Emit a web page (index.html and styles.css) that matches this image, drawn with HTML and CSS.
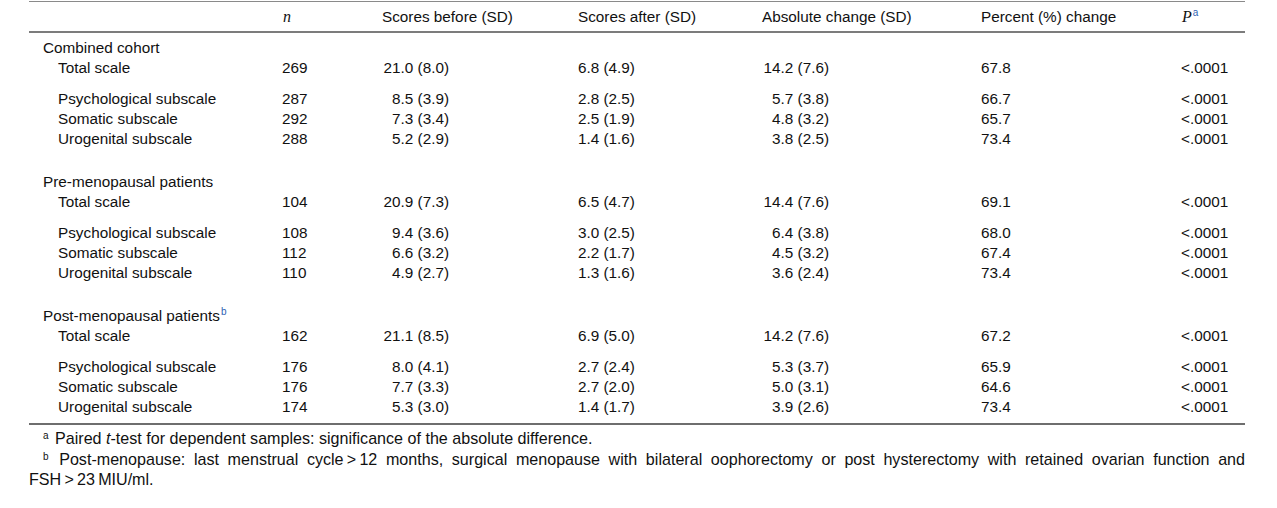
FILE: index.html
```html
<!DOCTYPE html>
<html lang="en">
<head>
<meta charset="utf-8">
<title>Scores table</title>
<link rel="stylesheet" href="styles.css">
</head>
<body>
<div class="wrap">
<table class="data">
  <colgroup>
    <col class="c-label"><col class="c-n"><col class="c-before"><col class="c-after"><col class="c-abs"><col class="c-pct"><col class="c-p">
  </colgroup>
  <thead>
    <tr>
      <th class="lbl"></th>
      <th><span class="ital">n</span></th>
      <th>Scores before (SD)</th>
      <th>Scores after (SD)</th>
      <th>Absolute change (SD)</th>
      <th>Percent (%) change</th>
      <th><span class="ital">P</span><sup class="ref">a</sup></th>
    </tr>
  </thead>
  <tbody>
    <tr class="first"><td class="lbl">Combined cohort</td><td></td><td></td><td></td><td></td><td></td><td></td></tr>
    <tr><td class="lbl sub">Total scale</td><td>269</td><td><span class="dec">21.0 (8.0)</span></td><td>6.8 (4.9)</td><td><span class="dec">14.2 (7.6)</span></td><td>67.8</td><td>&lt;.0001</td></tr>
    <tr class="gap"><td class="lbl sub">Psychological subscale</td><td>287</td><td><span class="dec">8.5 (3.9)</span></td><td>2.8 (2.5)</td><td><span class="dec">5.7 (3.8)</span></td><td>66.7</td><td>&lt;.0001</td></tr>
    <tr><td class="lbl sub">Somatic subscale</td><td>292</td><td><span class="dec">7.3 (3.4)</span></td><td>2.5 (1.9)</td><td><span class="dec">4.8 (3.2)</span></td><td>65.7</td><td>&lt;.0001</td></tr>
    <tr><td class="lbl sub">Urogenital subscale</td><td>288</td><td><span class="dec">5.2 (2.9)</span></td><td>1.4 (1.6)</td><td><span class="dec">3.8 (2.5)</span></td><td>73.4</td><td>&lt;.0001</td></tr>

    <tr class="sec"><td class="lbl">Pre-menopausal patients</td><td></td><td></td><td></td><td></td><td></td><td></td></tr>
    <tr><td class="lbl sub">Total scale</td><td>104</td><td><span class="dec">20.9 (7.3)</span></td><td>6.5 (4.7)</td><td><span class="dec">14.4 (7.6)</span></td><td>69.1</td><td>&lt;.0001</td></tr>
    <tr class="gap"><td class="lbl sub">Psychological subscale</td><td>108</td><td><span class="dec">9.4 (3.6)</span></td><td>3.0 (2.5)</td><td><span class="dec">6.4 (3.8)</span></td><td>68.0</td><td>&lt;.0001</td></tr>
    <tr><td class="lbl sub">Somatic subscale</td><td>112</td><td><span class="dec">6.6 (3.2)</span></td><td>2.2 (1.7)</td><td><span class="dec">4.5 (3.2)</span></td><td>67.4</td><td>&lt;.0001</td></tr>
    <tr><td class="lbl sub">Urogenital subscale</td><td>110</td><td><span class="dec">4.9 (2.7)</span></td><td>1.3 (1.6)</td><td><span class="dec">3.6 (2.4)</span></td><td>73.4</td><td>&lt;.0001</td></tr>

    <tr class="sec"><td class="lbl">Post-menopausal patients<sup class="ref">b</sup></td><td></td><td></td><td></td><td></td><td></td><td></td></tr>
    <tr><td class="lbl sub">Total scale</td><td>162</td><td><span class="dec">21.1 (8.5)</span></td><td>6.9 (5.0)</td><td><span class="dec">14.2 (7.6)</span></td><td>67.2</td><td>&lt;.0001</td></tr>
    <tr class="gap"><td class="lbl sub">Psychological subscale</td><td>176</td><td><span class="dec">8.0 (4.1)</span></td><td>2.7 (2.4)</td><td><span class="dec">5.3 (3.7)</span></td><td>65.9</td><td>&lt;.0001</td></tr>
    <tr><td class="lbl sub">Somatic subscale</td><td>176</td><td><span class="dec">7.7 (3.3)</span></td><td>2.7 (2.0)</td><td><span class="dec">5.0 (3.1)</span></td><td>64.6</td><td>&lt;.0001</td></tr>
    <tr class="last"><td class="lbl sub">Urogenital subscale</td><td>174</td><td><span class="dec">5.3 (3.0)</span></td><td>1.4 (1.7)</td><td><span class="dec">3.9 (2.6)</span></td><td>73.4</td><td>&lt;.0001</td></tr>
  </tbody>
</table>
<div class="notes">
  <p class="note"><sup>a</sup> Paired <i>t</i>-test for dependent samples: significance of the absolute difference.</p>
  <p class="note"><sup>b</sup> Post-menopause: last menstrual <span class="keep">cycle&thinsp;&gt;&thinsp;12</span> months, surgical menopause with bilateral oophorectomy or post hysterectomy with retained ovarian function and <span class="keep">FSH&thinsp;&gt;&thinsp;23&thinsp;MIU/ml.</span></p>
</div>
</div>
</body>
</html>
```

FILE: styles.css
```css
html, body {
  margin: 0;
  padding: 0;
  background: #ffffff;
}

body {
  font-family: "Liberation Sans", Arial, sans-serif;
  font-size: 15.3px;
  color: #111111;
}

.wrap {
  width: 1216px;
  margin-left: 29px;
  padding-top: 1px;
}

.data {
  width: 1216px;
  table-layout: fixed;
  border-collapse: separate;
  border-spacing: 0;
}

.c-label { width: 253px; }
.c-n { width: 100px; }
.c-before { width: 196px; }
.c-after { width: 184px; }
.c-abs { width: 219px; }
.c-pct { width: 200px; }
.c-p { width: 64px; }

.data th,
.data td {
  padding: 0;
  text-align: left;
  font-weight: normal;
  line-height: 20px;
  white-space: nowrap;
  vertical-align: middle;
}

.data th {
  border-top: 1px solid #8a8a8a;
  border-bottom: 2px solid #7c7c7c;
  padding-top: 5px;
  padding-bottom: 4px;
}

.data .lbl {
  padding-left: 14px;
}

.data .lbl.sub {
  padding-left: 29px;
}

.data tr.first td { padding-top: 5px; }
.data tr.gap td { padding-top: 11px; }
.data tr.sec td { padding-top: 23px; }
.data tr.last td {
  padding-bottom: 6px;
  border-bottom: 2px solid #6e6e6e;
}

.ital {
  font-family: "Liberation Serif", "Times New Roman", serif;
  font-style: italic;
  font-size: 16px;
  padding-left: 1px;
}

sup {
  font-size: 10px;
  line-height: 0;
  vertical-align: 6px;
}

sup.ref {
  color: #2f5fb3;
  padding-left: 1px;
}

.dec {
  display: inline-block;
  width: 67px;
  text-align: right;
}

.notes {
  padding-top: 3px;
}

.note {
  margin: 0;
  font-size: 16.1px;
  line-height: 20.5px;
  text-indent: 14px;
  text-align: justify;
}

.note sup {
  padding-right: 2px;
  vertical-align: 5px;
}

.keep {
  white-space: nowrap;
}
```
